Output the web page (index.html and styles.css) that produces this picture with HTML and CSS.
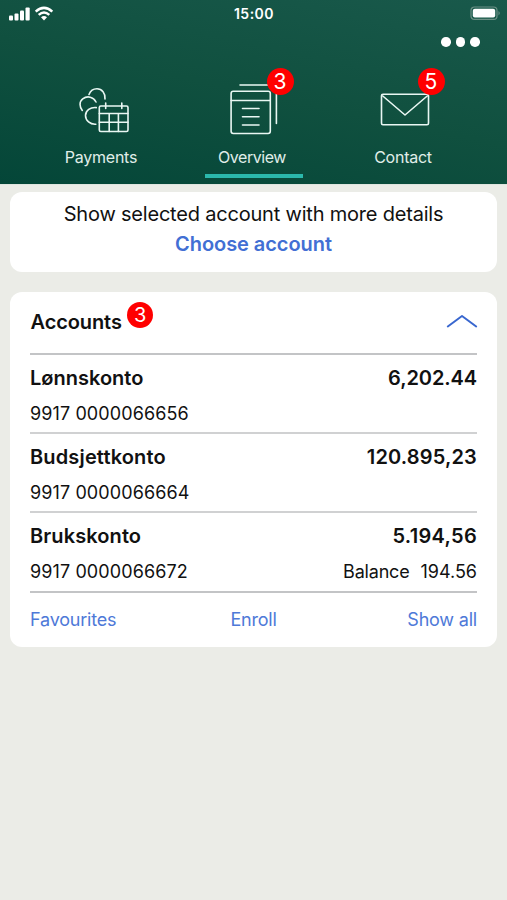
FILE: index.html
```html
<!DOCTYPE html>
<html lang="en">
<head>
<meta charset="utf-8">
<title>Accounts overview</title>
<link rel="stylesheet" href="styles.css">
</head>
<body>
<header class="header">
  <div class="status">
    <svg class="signal" width="46" height="16" viewBox="0 0 46 16" fill="#fff">
      <rect x="1" y="9.5" width="4" height="5" rx="1"/><rect x="6.5" y="7.5" width="4" height="7" rx="1"/><rect x="12" y="4.5" width="4" height="10" rx="1"/><rect x="17.5" y="1.5" width="4.2" height="13" rx="1"/>
      <g fill="none" stroke="#fff" stroke-width="2.5"><path d="M27.7 5.7Q36 -1.9 44.3 5.7"/><path d="M30.7 8.9Q36 4.1 41.3 8.9"/></g>
      <path d="M33 11.2Q36 8.7 39 11.2L36 14.4Z"/>
    </svg>
    <span class="time">15:00</span>
    <svg class="battery" width="31" height="15" viewBox="0 0 31 15"><rect x="1" y="1" width="26" height="12.4" rx="3.5" fill="none" stroke="#6b9085" stroke-width="1.2"/><rect x="2.8" y="2.8" width="22.4" height="8.8" rx="2" fill="#fff"/><path d="M28.5 5Q31 7.2 28.5 9.4Z" fill="#6b9085"/></svg>
  </div>
  <div class="more"><i class="dot"></i><i class="dot"></i><i class="dot"></i></div>
  <nav class="tabs">
    <a class="tab">
      <svg class="icon" width="60" height="60" viewBox="0 0 60 60"><g fill="none" stroke="#e9f7f3" stroke-width="1.6" stroke-linecap="round">
        <path d="M18 15.5C19.5 11.5 22.5 9.8 26 9.8C31 9.8 34.5 14 34 20"/>
        <path d="M11.3 31.5C8.5 28 8 22.8 11.7 19.9C16.5 16.1 22.5 18 25 23"/>
        <path d="M25.3 28.6C19.5 28 14.5 31.5 14.5 36.5C14.5 41.5 19.2 45.6 24.8 45.2"/>
        <rect x="28.3" y="27" width="28.7" height="25.5" rx="1.5"/><path d="M28.3 34.5H57M28.3 43.2H57M38.2 34.5V52.5M47.4 34.5V52.5M34.7 24V29.5M50.8 24V29.5"/>
      </g></svg>
      <span class="label pay">Payments</span>
    </a>
    <a class="tab active">
      <svg class="icon" width="60" height="60" viewBox="0 0 60 60"><g fill="none" stroke="#e9f7f3" stroke-width="1.6" stroke-linecap="round">
        <rect x="9.1" y="12.3" width="39.2" height="42.2" rx="2.2"/><path d="M9.1 21.5H48.3M20.5 29.5H37M20.5 37.7H37M20.5 46H37M18 6H47M54.4 14V44.5"/>
      </g></svg>
      <b class="badge">3</b>
      <span class="label over">Overview</span>
    </a>
    <a class="tab">
      <svg class="icon" width="60" height="60" viewBox="0 0 60 60"><g fill="none" stroke="#e9f7f3" stroke-width="1.6" stroke-linejoin="round">
        <rect x="8.5" y="15.3" width="47" height="30.5" rx="1.5"/><path d="M9.2 16.5L32 36L54.8 16.5"/>
      </g></svg>
      <b class="badge">5</b>
      <span class="label contact">Contact</span>
    </a>
  </nav>
</header>
<main class="content">
  <section class="card choose">
    <p class="prompt">Show selected account with more details</p>
    <a class="choose-link">Choose account</a>
  </section>
  <section class="card accounts">
    <div class="heading">
      <h2 class="title">Accounts</h2><b class="badge count">3</b>
      <svg class="chevron" width="32" height="16" viewBox="0 0 32 16"><path d="M1.8 13.5L16 3L30.2 13.5" fill="none" stroke="#3967cf" stroke-width="2" stroke-linecap="round" stroke-linejoin="round"/></svg>
    </div>
    <div class="account">
      <div class="line main"><span class="n1">Lønnskonto</span><span class="a1">6,202.44</span></div>
      <div class="line sub"><span class="number">9917 0000066656</span></div>
    </div>
    <div class="account">
      <div class="line main"><span class="n2">Budsjettkonto</span><span class="a2">120.895,23</span></div>
      <div class="line sub"><span class="number">9917 0000066664</span></div>
    </div>
    <div class="account last">
      <div class="line main"><span class="n3">Brukskonto</span><span class="a3">5.194,56</span></div>
      <div class="line sub"><span class="number">9917 0000066672</span><span class="balance"><span class="balance-label">Balance</span><span>194.56</span></span></div>
    </div>
    <div class="actions"><a>Favourites</a><a class="enroll">Enroll</a><a>Show all</a></div>
  </section>
</main>
</body>
</html>
```
FILE: styles.css
```css
* { box-sizing: border-box; }
body { margin: 0; min-height: 900px; background: #ebece7; color: #111; font-family: Inter, "Liberation Sans", sans-serif; }
h2, p { margin: 0; }
.header { height: 184px; background: linear-gradient(192deg, #19594b 0%, #10503f 50%, #044638 100%); color: #fff; }
.status { height: 28px; display: grid; grid-template-columns: 1fr auto 1fr; padding: 0 6px 0 8px; align-items: center; }
.signal { margin-top: -1px; }
.time { font-size: 14px; font-weight: 600; line-height: 28px; letter-spacing: 0.5px; margin-left: -1px; }
.battery { justify-self: end; margin-top: -2px; }
.more { height: 28px; display: flex; justify-content: flex-end; align-items: center; gap: 5px; padding-right: 27px; }
.dot { width: 9.6px; height: 9.6px; border-radius: 50%; background: #fff; }
.tabs { height: 128px; display: grid; grid-template-columns: repeat(3, 151px); justify-content: center; margin-left: -3px; }
.tab { position: relative; display: flex; flex-direction: column; align-items: center; padding-top: 23px; }
.icon { display: block; margin-left: 0; }
.label { font-size: 16px; line-height: 20px; margin-top: 8px; color: #e0eee9; letter-spacing: -0.25px; }
.over { letter-spacing: -0.45px; }
.active::after { content: ""; width: 98px; height: 4px; background: #2bb8ac; margin: 7px 0 0 4px; }
.badge { width: 27px; height: 27px; border-radius: 50%; background: #f00; color: #fff; font-size: 21px; line-height: 28px; font-weight: 400; text-align: center; }
.tab .badge { position: absolute; left: 90px; top: 12px; }
.content { padding: 7px 10px 0 10px; border-top: 1px solid #dfe5df; display: grid; gap: 20px; }
.card { background: #fff; border-radius: 12px; }
.choose { height: 80px; text-align: center; padding-top: 8px; }
.prompt { font-size: 20px; line-height: 29px; letter-spacing: -0.2px; }
.choose-link { display: block; font-size: 20px; font-weight: 600; line-height: 30px; color: #426fd4; letter-spacing: -0.05px; }
.accounts { height: 355px; padding: 0 20px; }
.heading { height: 63px; display: flex; align-items: center; border-bottom: 2px solid #c3c4c6; }
.title { font-size: 20px; line-height: 24px; font-weight: 600; margin-top: -2px; letter-spacing: -0.1px; padding-left: 0.5px; }
.count { font-size: 20px; width: 26px; height: 26px; line-height: 27px; margin: -15px 0 0 5.5px; }
.chevron { margin: -3px -1px 0 auto; }
.account { height: 79px; padding-top: 7px; border-bottom: 2px solid #d0d1d2; }
.account + .account { height: 78.5px; }
.account.last { height: 80.5px; border-color: #c3c4c6; }
.line { display: flex; justify-content: space-between; }
.main { font-size: 20px; line-height: 32px; font-weight: 600; }
.n2, .a2 { letter-spacing: 0.15px; }
.n3 { letter-spacing: 0.1px; }
.a1 { letter-spacing: -0.1px; }
.a3 { letter-spacing: 0.3px; }
.sub { font-size: 18px; line-height: 24px; margin-top: 8px; }
.number { letter-spacing: 0.1px; }
.balance { display: flex; gap: 11px; }
.balance-label { letter-spacing: -0.2px; }
.actions { display: grid; grid-template-columns: 1fr auto 1fr; font-size: 18px; line-height: 24px; color: #4e79d8; padding-top: 15px; letter-spacing: -0.2px; }
.actions a:last-child { text-align: right; }
```
